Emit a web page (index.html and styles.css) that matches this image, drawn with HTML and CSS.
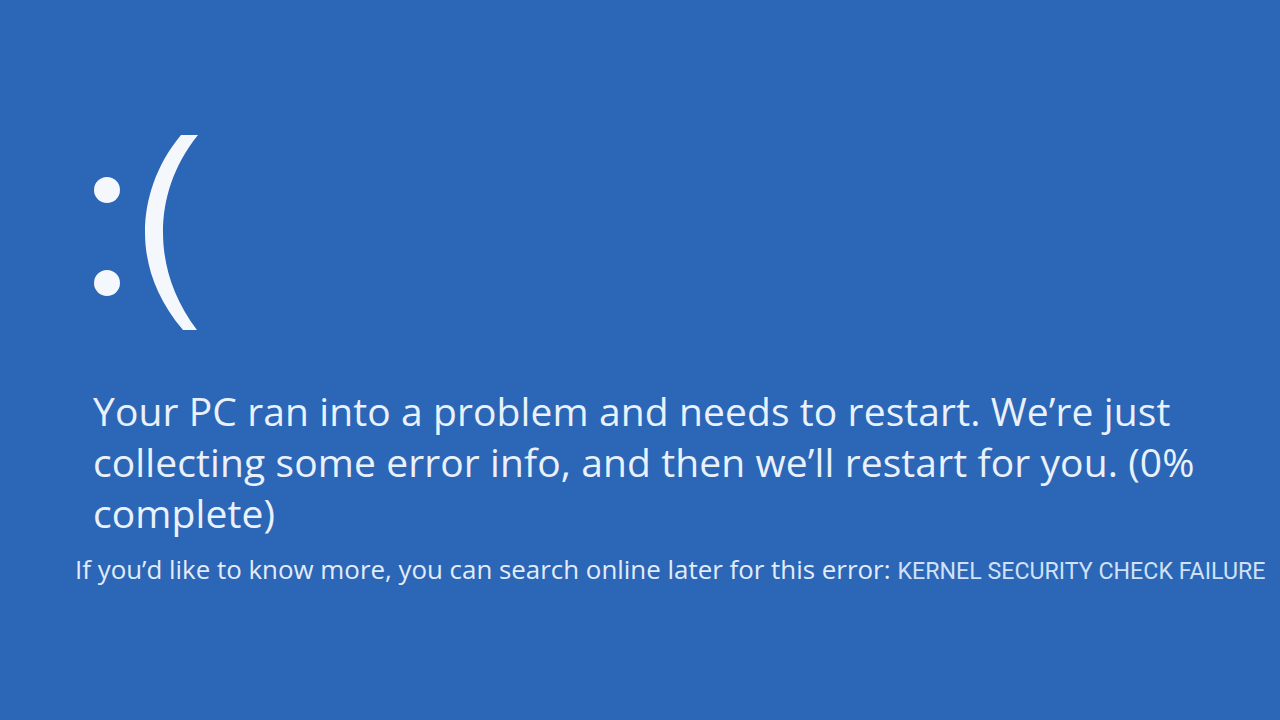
FILE: index.html
```html
<!DOCTYPE html>
<html lang="en">
<head>
<meta charset="utf-8">
<title>Blue screen</title>
<link rel="stylesheet" href="styles.css">
</head>
<body>
<main class="screen">
  <svg class="face" width="130" height="220" viewBox="80 120 130 220" aria-label=":(">
    <circle cx="107" cy="190" r="13" fill="#f4f7fc"/>
    <circle cx="107" cy="283" r="13" fill="#f4f7fc"/>
    <path d="M181 135 C156 165 145 200 145 232 C145 265 156 298 183 330 L197 330 C173 298 163 265 163 232 C163 200 173 166 198 135 Z" fill="#f4f7fc"/>
  </svg>
  <p class="message">Your PC ran into a problem and needs to restart. We’re just collecting some error info, and then we’ll restart for you. (0% complete)</p>
  <p class="more"><span class="more-text">If you’d like to know more, you can search online later for this error:</span> <span class="code">KERNEL SECURITY CHECK FAILURE</span></p>
</main>
</body>
</html>
```

FILE: styles.css
```css
html, body {
  margin: 0;
  padding: 0;
}
body {
  background: #2c66b7;
  width: 1280px;
  height: 720px;
  overflow: hidden;
}
.screen {
  display: flex;
  flex-direction: column;
  align-items: flex-start;
  padding-top: 120px;
}
.face {
  display: block;
  margin-left: 80px;
}
.message {
  margin: 45px 0 0 93px;
  width: 1140px;
  font-family: "Open Sans", "Noto Sans", sans-serif;
  font-size: 39px;
  letter-spacing: 0.1px;
  line-height: 51px;
  color: #e9f1fb;
}
.more {
  margin: 16px 0 0 75px;
  white-space: nowrap;
  line-height: 30px;
  color: #e2ecf9;
}
.more-text {
  font-family: "Open Sans", "Noto Sans", sans-serif;
  font-size: 25.9px;
}
.code {
  margin-left: 3px;
  font-family: "Roboto", "Liberation Sans", sans-serif;
  font-size: 23.2px;
  color: #cfe1f7;
}
```
